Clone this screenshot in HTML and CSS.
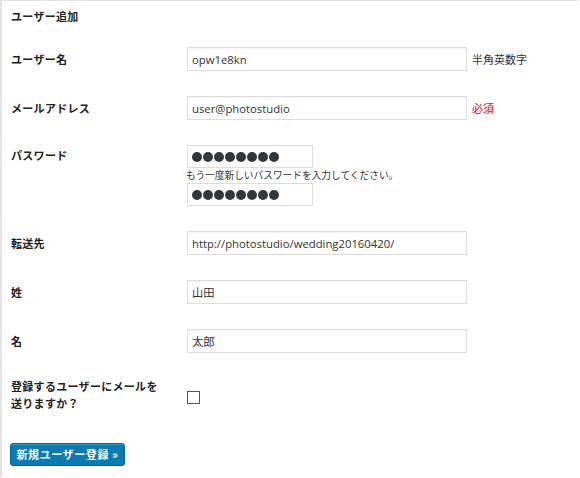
FILE: index.html
```html
<!DOCTYPE html>
<html lang="ja">
<head>
<meta charset="utf-8">
<link rel="stylesheet" href="styles.css">
</head>
<body>
<div class="page">
  <h3 class="title">ユーザー追加</h3>
  <div class="form">
    <div class="row">
      <div class="label">ユーザー名</div>
      <div class="field"><input class="text" type="text" value="opw1e8kn"><span class="note">半角英数字</span></div>
    </div>
    <div class="row">
      <div class="label">メールアドレス</div>
      <div class="field"><input class="text" type="text" value="user@photostudio"><span class="note req">必須</span></div>
    </div>
    <div class="row row-top">
      <div class="label">パスワード</div>
      <div class="field col">
        <div class="pw"><span></span><span></span><span></span><span></span><span></span><span></span><span></span><span></span></div>
        <div class="hint">もう一度新しいパスワードを入力してください。</div>
        <div class="pw"><span></span><span></span><span></span><span></span><span></span><span></span><span></span><span></span></div>
      </div>
    </div>
    <div class="row">
      <div class="label">転送先</div>
      <div class="field"><input class="text" type="text" value="http://photostudio/wedding20160420/"></div>
    </div>
    <div class="row">
      <div class="label">姓</div>
      <div class="field"><input class="text" type="text" value="山田"></div>
    </div>
    <div class="row">
      <div class="label">名</div>
      <div class="field"><input class="text" type="text" value="太郎"></div>
    </div>
    <div class="row row-check">
      <div class="label">登録するユーザーにメールを送りますか？</div>
      <div class="field"><span class="check"></span></div>
    </div>
  </div>
  <div class="submit"><button class="btn" type="button">新規ユーザー登録 »</button></div>
</div>
</body>
</html>
```
FILE: styles.css
```css
html, body {
  margin: 0;
  padding: 0;
  background: #fff;
}
.page {
  width: 578px;
  height: 477px;
  border-top: 1px solid #e3e3e3;
  border-left: 2px solid #e3e3e3;
  padding-left: 9px;
  font-family: "Noto Sans CJK JP", "Noto Sans", sans-serif;
  color: #222;
  box-sizing: border-box;
}
.title {
  margin: 0;
  padding: 7px 0 11px;
  font-size: 11px;
  line-height: 16px;
  font-weight: bold;
  letter-spacing: 0.3px;
}
.row {
  display: grid;
  grid-template-columns: 176px 1fr;
  align-items: center;
  padding: 12px 0 13px;
}
.row-top {
  align-items: start;
}
.label {
  font-size: 11px;
  font-weight: bold;
  letter-spacing: 0.3px;
  line-height: 17px;
  width: 152px;
}
.row-top .label {
  padding-top: 2px;
}
.field {
  display: flex;
  align-items: center;
}
.field.col {
  flex-direction: column;
  align-items: flex-start;
}
.text {
  box-sizing: border-box;
  width: 280px;
  height: 24px;
  margin: 0;
  padding: 0 4px;
  border: 1px solid #ddd;
  box-shadow: inset 0 1px 2px rgba(0,0,0,0.05);
  font-family: "Open Sans", "Noto Sans CJK JP", sans-serif;
  font-size: 11.3px;
  color: #333;
  outline: none;
}
.note {
  margin-left: 5px;
  font-size: 11px;
  color: #333;
}
.note.req {
  color: #e00;
}
.pw {
  box-sizing: border-box;
  width: 126px;
  height: 23px;
  border: 1px solid #ddd;
  display: flex;
  align-items: center;
  gap: 1px;
  padding-left: 4px;
}
.pw span {
  width: 10px;
  height: 10px;
  border-radius: 50%;
  background: #32373c;
}
.hint {
  font-size: 9.7px;
  line-height: 15px;
  color: #333;
  margin-left: -1px;
}
.check {
  display: block;
  width: 11px;
  height: 11px;
  border: 1px solid #555;
  margin-top: 4px;
}
.submit {
  padding-top: 15px;
}
.btn {
  height: 23px;
  width: 115px;
  margin-left: -1px;
  padding: 0;
  border: 1px solid #006799;
  border-radius: 3px;
  background: #0a7ab3;
  box-shadow: inset 0 1px 0 rgba(120,200,230,.4);
  color: #fff;
  font-family: "Noto Sans CJK JP", sans-serif;
  font-size: 11px;
  font-weight: bold;
  letter-spacing: 0.6px;
  line-height: 20px;
}
```
